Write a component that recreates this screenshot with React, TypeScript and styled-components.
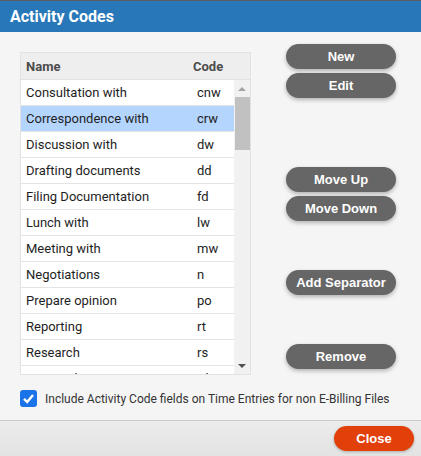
import React from "react";
import styled, { createGlobalStyle } from "styled-components";

const Global = createGlobalStyle`
  html, body { margin: 0; padding: 0; background: #f5f5f5; }
  body { font-family: Roboto, "Liberation Sans", Arial, sans-serif; }
  * { box-sizing: border-box; }
`;

const Dialog = styled.div`
  width: 421px;
  height: 456px;
  display: flex;
  flex-direction: column;
  background: #f5f5f5;
  border-top: 1px solid #5e5e5e;
  overflow: hidden;
`;

const TitleBar = styled.div`
  height: 31px;
  background: #2878b9;
  display: flex;
  align-items: center;
  padding-left: 10px;
  color: #fff;
  font-family: Roboto, sans-serif;
  font-weight: 700;
  font-size: 16px;
`;

const Body = styled.div`
  flex: 1;
  display: grid;
  grid-template-columns: 231px 110px;
  column-gap: 35px;
  padding: 12px 0 0 20px;
  align-items: start;
`;

const Table = styled.div`
  margin-top: 8px;
  height: 323px;
  border: 1px solid #e2e2e2;
  display: flex;
  flex-direction: column;
  background: #fff;
`;

const HeadRow = styled.div`
  height: 27px;
  flex: none;
  background: #eeeeee;
  border-bottom: 1px solid #e2e2e2;
  display: grid;
  grid-template-columns: 167px 1fr;
  align-items: center;
  padding-left: 5px;
  font-size: 13px;
  font-weight: 700;
  color: #4c4c4c;
`;

const TableBody = styled.div`
  flex: 1;
  display: flex;
  min-height: 0;
`;

const Rows = styled.div`
  flex: 1;
  overflow: hidden;
`;

const Row = styled.div<{ $selected?: boolean }>`
  height: 26px;
  display: grid;
  grid-template-columns: 171px 1fr;
  align-items: center;
  padding-left: 5px;
  border-bottom: 1px solid #e4e4e4;
  background: ${(p) => (p.$selected ? "#b4d5fe" : "#fff")};
  font-size: 13px;
  color: #1e1e1e;
  white-space: nowrap;
`;

const Scrollbar = styled.div`
  width: 16px;
  flex: none;
  background: #f1f1f1;
  display: flex;
  flex-direction: column;
  align-items: center;
`;

const Arrow = styled.div<{ $down?: boolean; $color: string }>`
  height: 17px;
  width: 100%;
  display: flex;
  align-items: center;
  justify-content: center;
  &::before {
    content: "";
    border-left: 4px solid transparent;
    border-right: 4px solid transparent;
    ${(p) =>
      p.$down
        ? `border-top: 4px solid ${p.$color};`
        : `border-bottom: 4px solid ${p.$color};`}
  }
`;

const Thumb = styled.div`
  width: 15px;
  height: 53px;
  background: #c1c1c1;
`;

const Spacer = styled.div`
  flex: 1;
`;

const ButtonCol = styled.div`
  display: flex;
  flex-direction: column;
`;

const PillButton = styled.button<{ $gap: number }>`
  margin-top: ${(p) => p.$gap}px;
  height: 25px;
  width: 110px;
  border: none;
  border-radius: 13px;
  background: #666666;
  color: #fff;
  font-family: "Liberation Sans", Arial, sans-serif;
  font-weight: 700;
  font-size: 13px;
  box-shadow: 0 2px 4px rgba(0, 0, 0, 0.28);
  padding: 0;
  cursor: pointer;
`;

const CheckRow = styled.label`
  display: flex;
  align-items: center;
  gap: 8px;
  padding: 0 0 0 20px;
  height: 43px;
  font-size: 12px;
  color: #333;
`;

const CheckBox = styled.span`
  width: 17px;
  height: 17px;
  border-radius: 3px;
  background: #1a73e8;
  display: flex;
  align-items: center;
  justify-content: center;
  flex: none;
`;

const Footer = styled.div`
  height: 36px;
  border-top: 1px solid #c9c9c9;
  background: linear-gradient(#ececec, #e3e3e3);
  display: flex;
  justify-content: flex-end;
  align-items: center;
  padding-right: 7px;
`;

const CloseButton = styled.button`
  width: 80px;
  height: 25px;
  border: none;
  border-radius: 13px;
  background: #e2400b;
  color: #fff;
  font-family: "Liberation Sans", Arial, sans-serif;
  font-weight: 700;
  font-size: 13px;
  box-shadow: 0 1px 3px rgba(0, 0, 0, 0.25);
  padding: 0;
`;

const rows: [string, string][] = [
  ["Consultation with", "cnw"],
  ["Correspondence with", "crw"],
  ["Discussion with", "dw"],
  ["Drafting documents", "dd"],
  ["Filing Documentation", "fd"],
  ["Lunch with", "lw"],
  ["Meeting with", "mw"],
  ["Negotiations", "n"],
  ["Prepare opinion", "po"],
  ["Reporting", "rt"],
  ["Research", "rs"],
  ["Review documents", "rd"],
];

const buttons: [string, number][] = [
  ["New", 0],
  ["Edit", 4],
  ["Move Up", 69],
  ["Move Down", 4],
  ["Add Separator", 49],
  ["Remove", 49],
];

export default function App() {
  return (
    <>
      <Global />
      <Dialog>
        <TitleBar>Activity Codes</TitleBar>
        <Body>
          <Table>
            <HeadRow>
              <span>Name</span>
              <span>Code</span>
            </HeadRow>
            <TableBody>
              <Rows>
                {rows.map(([n, c], i) => (
                  <Row key={n} $selected={i === 1}>
                    <span>{n}</span>
                    <span>{c}</span>
                  </Row>
                ))}
              </Rows>
              <Scrollbar>
                <Arrow $color="#a3a3a3" />
                <Thumb />
                <Spacer />
                <Arrow $down $color="#505050" />
              </Scrollbar>
            </TableBody>
          </Table>
          <ButtonCol>
            {buttons.map(([label, gap]) => (
              <PillButton key={label} $gap={gap}>
                {label}
              </PillButton>
            ))}
          </ButtonCol>
        </Body>
        <CheckRow>
          <CheckBox>
            <svg width="13" height="13" viewBox="0 0 13 13">
              <path d="M2 6.8 L5.2 10 L11 3" fill="none" stroke="#fff" strokeWidth="2.4" />
            </svg>
          </CheckBox>
          Include Activity Code fields on Time Entries for non E-Billing Files
        </CheckRow>
        <Footer>
          <CloseButton>Close</CloseButton>
        </Footer>
      </Dialog>
    </>
  );
}
